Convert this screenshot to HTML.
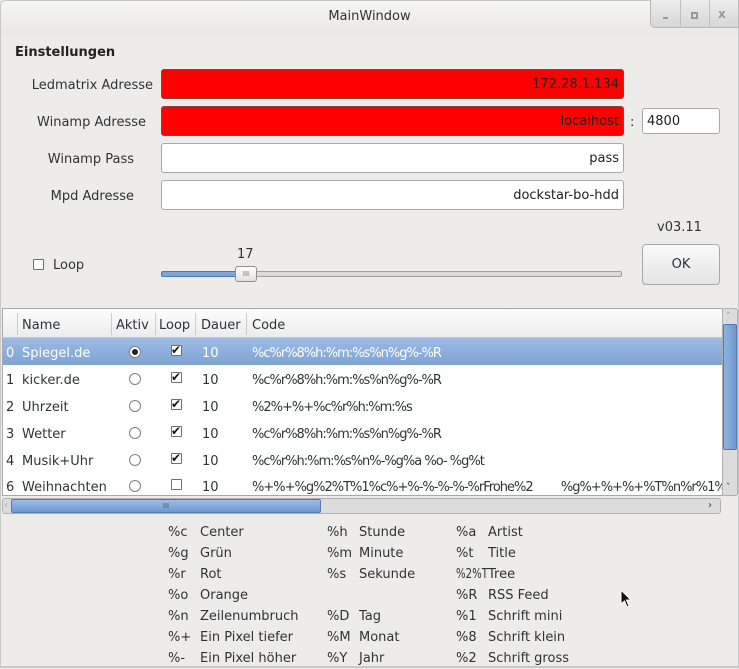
<!DOCTYPE html>
<html><head><meta charset="utf-8"><style>
*{box-sizing:border-box;margin:0;padding:0}
body{width:739px;height:668px;overflow:hidden;background:#edeceb;font-family:"DejaVu Sans","Liberation Sans",sans-serif;font-size:13px;color:#2e3436;position:relative}
.a{position:absolute;white-space:nowrap;line-height:16px}
.r{text-align:right}
.c{letter-spacing:-1px}
.inp{position:absolute;height:30px;border:1px solid #a8a8a8;border-radius:3px;background:#fff;text-align:right;padding-right:4px;line-height:30px;color:#222}
.red{background:#ff0000;border-color:#8a4040}
.cb{position:absolute;width:11px;height:11px;border:1px solid #707070;background:#fff;border-radius:1px}
.rb{position:absolute;width:12px;height:12px;border:1px solid #808080;border-radius:50%;background:#fff}
.row{position:absolute;left:3px;width:719px;height:27px;background:#fff}
</style></head><body>
<div style="position:absolute;left:0;top:0;width:739px;height:34px;background:linear-gradient(#f6f6f5,#e9e8e7);border:1px solid #c8c8c8;border-bottom:none;border-radius:5px 5px 0 0"></div>
<div class="a" style="left:0;width:739px;top:9px;text-align:center;color:#333">MainWindow</div>
<div style="position:absolute;left:650px;top:0;width:89px;height:28px;background:linear-gradient(#eeeeee,#d6d6d6);border:1px solid #b8b8b8;border-top:none;border-radius:0 0 0 5px"></div>
<div style="position:absolute;left:680px;top:0;width:1px;height:28px;background:#c0c0c0"></div>
<div style="position:absolute;left:709px;top:0;width:1px;height:28px;background:#c0c0c0"></div>
<div style="position:absolute;left:663px;top:17px;width:5px;height:2px;background:#999"></div>
<div style="position:absolute;left:691px;top:12px;width:7px;height:7px;border:2px solid #999"></div>
<div class="a" style="left:718px;top:6px;color:#999;font-size:12px;font-weight:bold">x</div>
<div style="position:absolute;left:0;top:34px;width:1px;height:634px;background:#c8c8c8"></div>
<div style="position:absolute;right:0;top:34px;width:1px;height:634px;background:#c8c8c8"></div>

<div class="a" style="left:15px;top:45px;font-weight:bold;color:#222">Einstellungen</div>

<div class="a r" style="right:586px;top:78px">Ledmatrix Adresse</div>
<div class="inp red" style="left:161px;top:69px;width:463px">172.28.1.134</div>
<div class="a r" style="right:593px;top:115px">Winamp Adresse</div>
<div class="inp red" style="left:161px;top:106px;width:463px">localhost</div>
<div class="a" style="left:630px;top:115px">:</div>
<div class="inp" style="left:642px;top:108px;width:78px;height:26px;line-height:26px;text-align:left;padding-left:4px">4800</div>
<div class="a r" style="right:605px;top:152px">Winamp Pass</div>
<div class="inp" style="left:161px;top:143px;width:463px">pass</div>
<div class="a r" style="right:605px;top:189px">Mpd Adresse</div>
<div class="inp" style="left:161px;top:180px;width:463px">dockstar-bo-hdd</div>

<div class="a" style="left:657px;top:220px">v03.11</div>
<div style="position:absolute;left:642px;top:244px;width:78px;height:41px;border:1px solid #a8a8a8;border-radius:4px;background:linear-gradient(#fafafa,#e4e4e4);text-align:center;line-height:40px">OK</div>

<div class="cb" style="left:33px;top:259px"></div>
<div class="a" style="left:53px;top:258px">Loop</div>
<div class="a" style="left:237px;top:247px">17</div>
<div style="position:absolute;left:161px;top:271px;width:461px;height:6px;border:1px solid #a0a0a0;border-radius:2px;background:#dcdcdc"></div>
<div style="position:absolute;left:161px;top:271px;width:80px;height:6px;border:1px solid #4a7ab8;border-radius:2px;background:#7ea6d9"></div>
<div style="position:absolute;left:235px;top:266px;width:22px;height:16px;border:1px solid #909090;border-radius:3px;background:linear-gradient(#fff,#e0e0e0);font-size:7px;text-align:center;line-height:14px;color:#666">III</div>

<div style="position:absolute;left:2px;top:308px;width:721px;height:188px;border:1px solid #a8a8a8;background:#fff"></div>
<div style="position:absolute;left:3px;top:309px;width:719px;height:29px;background:linear-gradient(#fdfdfd,#ececec);border-bottom:1px solid #c8c8c8"></div>
<div style="position:absolute;left:17px;top:313px;width:1px;height:22px;background:#ccc"></div>
<div style="position:absolute;left:111px;top:313px;width:1px;height:22px;background:#ccc"></div>
<div style="position:absolute;left:155px;top:313px;width:1px;height:22px;background:#ccc"></div>
<div style="position:absolute;left:195px;top:313px;width:1px;height:22px;background:#ccc"></div>
<div style="position:absolute;left:246px;top:313px;width:1px;height:22px;background:#ccc"></div>
<div class="a" style="left:22px;top:318px">Name</div>
<div class="a" style="left:116px;top:318px">Aktiv</div>
<div class="a" style="left:159px;top:318px">Loop</div>
<div class="a" style="left:201px;top:318px">Dauer</div>
<div class="a" style="left:252px;top:318px">Code</div>

<div class="row" style="top:338px;background:linear-gradient(#9dbbe3,#7fa3d3)"></div>
<div class="a" style="left:6px;top:346px;color:#fff">0</div><div class="a" style="left:22px;top:346px;color:#fff">Spiegel.de</div>
<div class="rb" style="left:129px;top:346px"></div><div style="position:absolute;left:132px;top:349px;width:6px;height:6px;border-radius:50%;background:#222"></div>
<div class="cb" style="left:171px;top:345px"></div><div class="a" style="left:171px;top:342px;font-size:12px;color:#111">✔</div>
<div class="a" style="left:202px;top:346px;color:#fff">10</div><div class="a c" style="left:252px;top:346px;color:#fff">%c%r%8%h:%m:%s%n%g%-%R</div>

<div class="a" style="left:6px;top:373px">1</div><div class="a" style="left:22px;top:373px">kicker.de</div>
<div class="rb" style="left:129px;top:373px"></div><div class="cb" style="left:171px;top:372px"></div><div class="a" style="left:171px;top:369px;font-size:12px;color:#111">✔</div>
<div class="a" style="left:202px;top:373px">10</div><div class="a c" style="left:252px;top:373px">%c%r%8%h:%m:%s%n%g%-%R</div>

<div class="a" style="left:6px;top:400px">2</div><div class="a" style="left:22px;top:400px">Uhrzeit</div>
<div class="rb" style="left:129px;top:400px"></div><div class="cb" style="left:171px;top:399px"></div><div class="a" style="left:171px;top:396px;font-size:12px;color:#111">✔</div>
<div class="a" style="left:202px;top:400px">10</div><div class="a c" style="left:252px;top:400px">%2%+%+%c%r%h:%m:%s</div>

<div class="a" style="left:6px;top:427px">3</div><div class="a" style="left:22px;top:427px">Wetter</div>
<div class="rb" style="left:129px;top:427px"></div><div class="cb" style="left:171px;top:426px"></div><div class="a" style="left:171px;top:423px;font-size:12px;color:#111">✔</div>
<div class="a" style="left:202px;top:427px">10</div><div class="a c" style="left:252px;top:427px">%c%r%8%h:%m:%s%n%g%-%R</div>

<div class="a" style="left:6px;top:454px">4</div><div class="a" style="left:22px;top:454px">Musik+Uhr</div>
<div class="rb" style="left:129px;top:454px"></div><div class="cb" style="left:171px;top:453px"></div><div class="a" style="left:171px;top:450px;font-size:12px;color:#111">✔</div>
<div class="a" style="left:202px;top:454px">10</div><div class="a c" style="left:252px;top:454px">%c%r%h:%m:%s%n%-%g%a %o- %g%t</div>

<div style="position:absolute;left:3px;top:474px;width:719px;height:21px;overflow:hidden">
<div class="a" style="left:3px;top:6px">6</div><div class="a" style="left:19px;top:6px">Weihnachten</div>
<div class="rb" style="left:126px;top:6px"></div><div class="cb" style="left:168px;top:5px"></div>
<div class="a" style="left:199px;top:6px">10</div><div class="a c" style="left:249px;top:6px">%+%+%g%2%T%1%c%+%-%-%-%-%rFrohe%2&nbsp;&nbsp;&nbsp;&nbsp;&nbsp;&nbsp;&nbsp;&nbsp;&nbsp;%g%+%+%+%T%n%r%1%</div>
</div>

<div style="position:absolute;left:722px;top:308px;width:16px;height:188px;background:#dcdcdc;border:1px solid #b0b0b0;border-radius:3px"></div>
<div class="a" style="left:726px;top:309px;font-size:9px;color:#888">ˆ</div>
<div style="position:absolute;left:723px;top:324px;width:14px;height:126px;background:linear-gradient(90deg,#8fb3e0,#6f98cf);border:1px solid #4f7bb5;border-radius:2px"></div>
<div class="a" style="left:726px;top:480px;font-size:9px;color:#333">ˇ</div>

<div style="position:absolute;left:2px;top:498px;width:719px;height:16px;background:#dcdcdc;border:1px solid #b0b0b0;border-radius:3px"></div>
<div style="position:absolute;left:11px;top:499px;width:310px;height:14px;background:linear-gradient(#9dbde6,#6f98cf);border:1px solid #4f7bb5;border-radius:2px;text-align:center;font-size:7px;line-height:12px;color:#456">III</div>
<div class="a" style="left:4px;top:498px;font-size:10px;color:#aaa">‹</div>
<div class="a" style="left:708px;top:498px;font-size:10px;color:#333">›</div>

<div class="a" style="left:168px;top:522px;line-height:21px">%c<br>%g<br>%r<br>%o<br>%n<br>%+<br>%-</div>
<div class="a" style="left:200px;top:522px;line-height:21px">Center<br>Grün<br>Rot<br>Orange<br>Zeilenumbruch<br>Ein Pixel tiefer<br>Ein Pixel höher</div>
<div class="a" style="left:327px;top:522px;line-height:21px">%h<br>%m<br>%s<br>&nbsp;<br>%D<br>%M<br>%Y</div>
<div class="a" style="left:359px;top:522px;line-height:21px">Stunde<br>Minute<br>Sekunde<br>&nbsp;<br>Tag<br>Monat<br>Jahr</div>
<div class="a" style="left:456px;top:522px;line-height:21px">%a<br>%t<br><span style="display:inline-block;transform:scaleX(0.78);transform-origin:left">%2%T</span><br>%R<br>%1<br>%8<br>%2</div>
<div class="a" style="left:488px;top:522px;line-height:21px">Artist<br>Title<br>Tree<br>RSS Feed<br>Schrift mini<br>Schrift klein<br>Schrift gross</div>
<svg style="position:absolute;left:620px;top:589px" width="14" height="20"><path d="M1 1 L1 15 L4.5 12 L7 18 L9 17 L6.5 11 L11 11 Z" fill="#111" stroke="#fff" stroke-width="1"/></svg>
<div style="position:absolute;left:0;top:666px;width:739px;height:2px;background:#c8c8c8"></div>
</body></html>
